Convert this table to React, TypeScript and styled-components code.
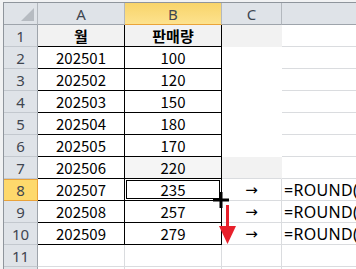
import React from 'react'
import styled, { createGlobalStyle } from 'styled-components'

const GlobalStyle = createGlobalStyle`
  html, body {
    margin: 0;
    padding: 0;
    background: #ffffff;
    overflow: hidden;
  }
`;

const GRID = '#dadcdf';
const TABLE = '#000000';
const HEAD_LINE = '#9ea4ab';
const HEAD_SEP = '#c3c8ce';

const Frame = styled.div`
  width: 356px;
  height: 269px;
  overflow: hidden;
  background: #f1f2f3;
  padding: 2px 0 0 3px;
  box-sizing: border-box;
`;

const Sheet = styled.div`
  display: grid;
  grid-template-columns: 34px 87px 97px 60px 1fr;
  grid-auto-rows: 22px;
  background: #ffffff;
  border-top: 1px solid #8f959c;
  border-left: 1px solid #8f959c;
  font-family: "Noto Sans CJK KR", "Noto Sans", sans-serif;
  font-size: 15px;
  color: #000;
`;

const ColHead = styled.div<{ $active?: boolean; $last?: boolean }>`
  box-sizing: border-box;
  display: flex;
  align-items: center;
  justify-content: center;
  font-family: "Noto Sans", sans-serif;
  font-size: 15px;
  color: #3f4650;
  background: ${({ $active }) =>
    $active ? 'linear-gradient(#f8d46a, #fde28e)' : '#dfe3e8'};
  border-right: 1px solid ${({ $last }) => ($last ? 'transparent' : '#b3b8be')};
  border-bottom: 1px solid ${({ $active }) => ($active ? '#eaa43a' : HEAD_LINE)};
`;

const Corner = styled.div`
  box-sizing: border-box;
  background: #dfe3e8;
  border-right: 1px solid #b3b8be;
  border-bottom: 1px solid ${HEAD_LINE};
  display: flex;
  align-items: flex-end;
  justify-content: flex-end;
  padding: 0 3px 3px 0;
`;

const RowHead = styled.div<{ $active?: boolean }>`
  box-sizing: border-box;
  display: flex;
  align-items: center;
  justify-content: center;
  font-family: "Noto Sans", sans-serif;
  font-size: 15px;
  color: #3f4650;
  background: ${({ $active }) => ($active ? '#fed96c' : '#dfe3e8')};
  border-right: 1px solid ${({ $active }) => ($active ? '#e9a23a' : HEAD_LINE)};
  border-bottom: 1px solid ${({ $active }) => ($active ? '#e9a23a' : HEAD_SEP)};
  box-shadow: ${({ $active }) => ($active ? 'inset 0 1px 0 #e9a23a' : 'none')};
`;

const Cell = styled.div<{
  $bg?: string;
  $right?: string;
  $bottom?: string;
  $align?: 'left' | 'center';
  $bold?: boolean;
}>`
  box-sizing: border-box;
  position: relative;
  display: flex;
  align-items: center;
  justify-content: ${({ $align }) => ($align === 'left' ? 'flex-start' : 'center')};
  padding-left: ${({ $align }) => ($align === 'left' ? '2px' : '0')};
  white-space: nowrap;
  background: ${({ $bg }) => $bg || '#ffffff'};
  border-right: 1px solid ${({ $right }) => $right || 'transparent'};
  border-bottom: 1px solid ${({ $bottom }) => $bottom || 'transparent'};
  font-weight: ${({ $bold }) => ($bold ? 700 : 400)};
`;

const Formula = styled.span`
  font-family: "Noto Sans", sans-serif;
  font-size: 16px;
  letter-spacing: 0.3px;
`;

const Arrow = styled.span`
  font-family: "DejaVu Sans", sans-serif;
  font-size: 15px;
`;

/* active-cell frame drawn over B8 */
const Selection = styled.div`
  position: absolute;
  left: -1px;
  top: -1px;
  right: -1px;
  bottom: -1px;
  border: 1px solid #000;
  box-shadow: inset 0 0 0 1px #fff, inset 0 0 0 2px #000;
  pointer-events: none;
`;

const FillCursor = styled.svg`
  position: absolute;
  left: 88px;
  top: 13px;
  z-index: 2;
`;

const DragArrow = styled.svg`
  position: absolute;
  left: 94px;
  top: 26px;
  z-index: 2;
`;

type Row = { a: string; b: string; c?: string; d?: string };

const rows: Row[] = [
  { a: '월', b: '판매량' },
  { a: '202501', b: '100' },
  { a: '202502', b: '120' },
  { a: '202503', b: '150' },
  { a: '202504', b: '180' },
  { a: '202505', b: '170' },
  { a: '202506', b: '220' },
  { a: '202507', b: '235', c: '→', d: '=ROUND(' },
  { a: '202508', b: '257', c: '→', d: '=ROUND(' },
  { a: '202509', b: '279', c: '→', d: '=ROUND(' },
  { a: '', b: '' },
  { a: '', b: '' },
];

const ACTIVE_ROW = 8;
const LAST_NUMBERED = 11;

const App = () => {
  return (
    <Frame>
      <GlobalStyle />
      <Sheet>
        <Corner>
          <svg width="13" height="13" viewBox="0 0 13 13">
            <polygon points="13,0 13,13 0,13" fill="#b6bbc1" />
          </svg>
        </Corner>
        <ColHead>A</ColHead>
        <ColHead $active>B</ColHead>
        <ColHead>C</ColHead>
        <ColHead $last />

        {rows.map((row, i) => {
          const n = i + 1;
          const inTable = n <= 10;
          const header = n === 1;
          const plainC = n <= 7;
          return (
            <React.Fragment key={n}>
              <RowHead $active={n === ACTIVE_ROW}>{n <= LAST_NUMBERED ? n : ''}</RowHead>
              <Cell
                $bg={header ? '#f2f2f2' : undefined}
                $right={inTable ? TABLE : GRID}
                $bottom={inTable ? TABLE : GRID}
                $bold={header}
              >
                {row.a}
              </Cell>
              <Cell
                $bg={header ? '#f2f2f2' : n === 7 ? '#f5f5f5' : undefined}
                $right={inTable ? TABLE : GRID}
                $bottom={inTable ? TABLE : GRID}
                $bold={header}
              >
                {row.b}
                {n === ACTIVE_ROW && (
                  <>
                    <Selection />
                    <FillCursor width="16" height="16" viewBox="0 0 16 16">
                      <rect x="0" y="6.5" width="16" height="3" fill="#000" />
                      <rect x="6.5" y="0" width="3" height="16" fill="#000" />
                    </FillCursor>
                    <DragArrow width="17" height="40" viewBox="0 0 17 40">
                      <rect x="7" y="0" width="3" height="23" fill="#e8202b" />
                      <polygon points="0,21 17,21 8.5,39" fill="#e8202b" />
                    </DragArrow>
                  </>
                )}
              </Cell>
              <Cell
                $bg={header || n === 7 ? '#f2f2f2' : undefined}
                $right={plainC ? undefined : GRID}
                $bottom={n < 7 ? undefined : GRID}
              >
                {row.c && <Arrow>{row.c}</Arrow>}
              </Cell>
              <Cell $align="left" $bottom={GRID}>
                {row.d && <Formula>{row.d}</Formula>}
              </Cell>
            </React.Fragment>
          );
        })}
      </Sheet>
    </Frame>
  )
}

export default App
